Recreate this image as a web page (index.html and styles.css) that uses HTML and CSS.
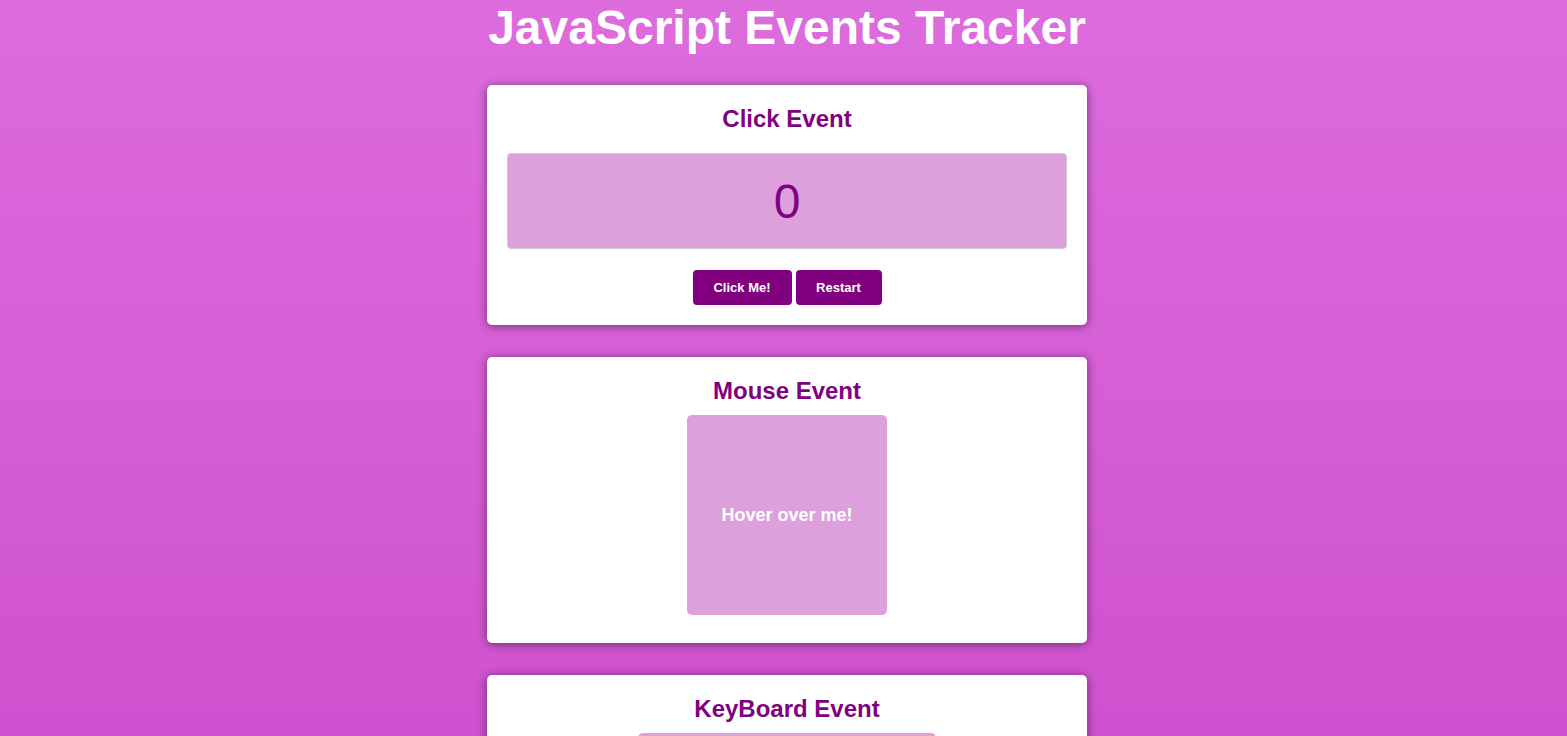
FILE: index.html
```html
<!DOCTYPE html>
<html lang="en">
<head>
<meta charset="utf-8">
<title>JavaScript Events Tracker</title>
<link rel="stylesheet" href="styles.css">
</head>
<body>
<main class="page">
  <h1 class="title">JavaScript Events Tracker</h1>

  <section class="card">
    <h2 class="card-title">Click Event</h2>
    <div class="counter">0</div>
    <div class="actions">
      <button class="btn">Click Me!</button>
      <button class="btn btn-restart">Restart</button>
    </div>
  </section>

  <section class="card">
    <h2 class="card-title card-title-tight">Mouse Event</h2>
    <div class="hover-box">Hover over me!</div>
  </section>

  <section class="card">
    <h2 class="card-title card-title-tight">KeyBoard Event</h2>
    <input class="key-input" type="text">
  </section>
</main>
</body>
</html>
```

FILE: styles.css
```css
html, body {
  margin: 0;
  padding: 0;
}

body {
  font-family: "Liberation Sans", Arial, sans-serif;
  background: linear-gradient(180deg, #dd6cdd 0%, #cf51cf 100%) fixed;
  min-height: 100vh;
}

.page {
  display: flex;
  flex-direction: column;
  align-items: center;
  padding: 0 0 40px 7px;
}

.title {
  margin: 0 0 30px;
  font-size: 48px;
  font-weight: bold;
  color: #ffffff;
  line-height: 55px;
  text-align: center;
}

.card {
  box-sizing: border-box;
  width: 600px;
  background: #ffffff;
  border-radius: 5px;
  padding: 20px;
  margin-bottom: 32px;
  box-shadow: 0 1px 10px rgba(0, 0, 0, 0.5);
  display: flex;
  flex-direction: column;
  align-items: center;
}

.card-title {
  margin: 0 0 20px;
  font-size: 24px;
  line-height: 28px;
  font-weight: bold;
  color: #800080;
  text-align: center;
}

.card-title-tight {
  margin-bottom: 10px;
}

.counter {
  box-sizing: border-box;
  width: 100%;
  height: 96px;
  background: #dda0dd;
  border: 1px solid #cccccc;
  border-radius: 4px;
  display: flex;
  align-items: center;
  justify-content: center;
  font-size: 48px;
  color: #800080;
}

.actions {
  display: flex;
  gap: 4px;
  margin-top: 21px;
}

.btn {
  font-family: "Liberation Sans", Arial, sans-serif;
  font-size: 13px;
  font-weight: bold;
  line-height: 15px;
  color: #ffffff;
  background: #800080;
  border: none;
  border-radius: 4px;
  padding: 10px 20px;
  width: 99px;
}

.btn-restart {
  width: 86px;
}

.hover-box {
  width: 200px;
  height: 200px;
  background: #dda0dd;
  border-radius: 5px;
  display: flex;
  align-items: center;
  justify-content: center;
  color: #ffffff;
  font-size: 18px;
  font-weight: bold;
  margin-bottom: 8px;
}

.key-input {
  box-sizing: border-box;
  width: 298px;
  height: 40px;
  background: #dda0dd;
  border: none;
  border-radius: 5px;
}
```
